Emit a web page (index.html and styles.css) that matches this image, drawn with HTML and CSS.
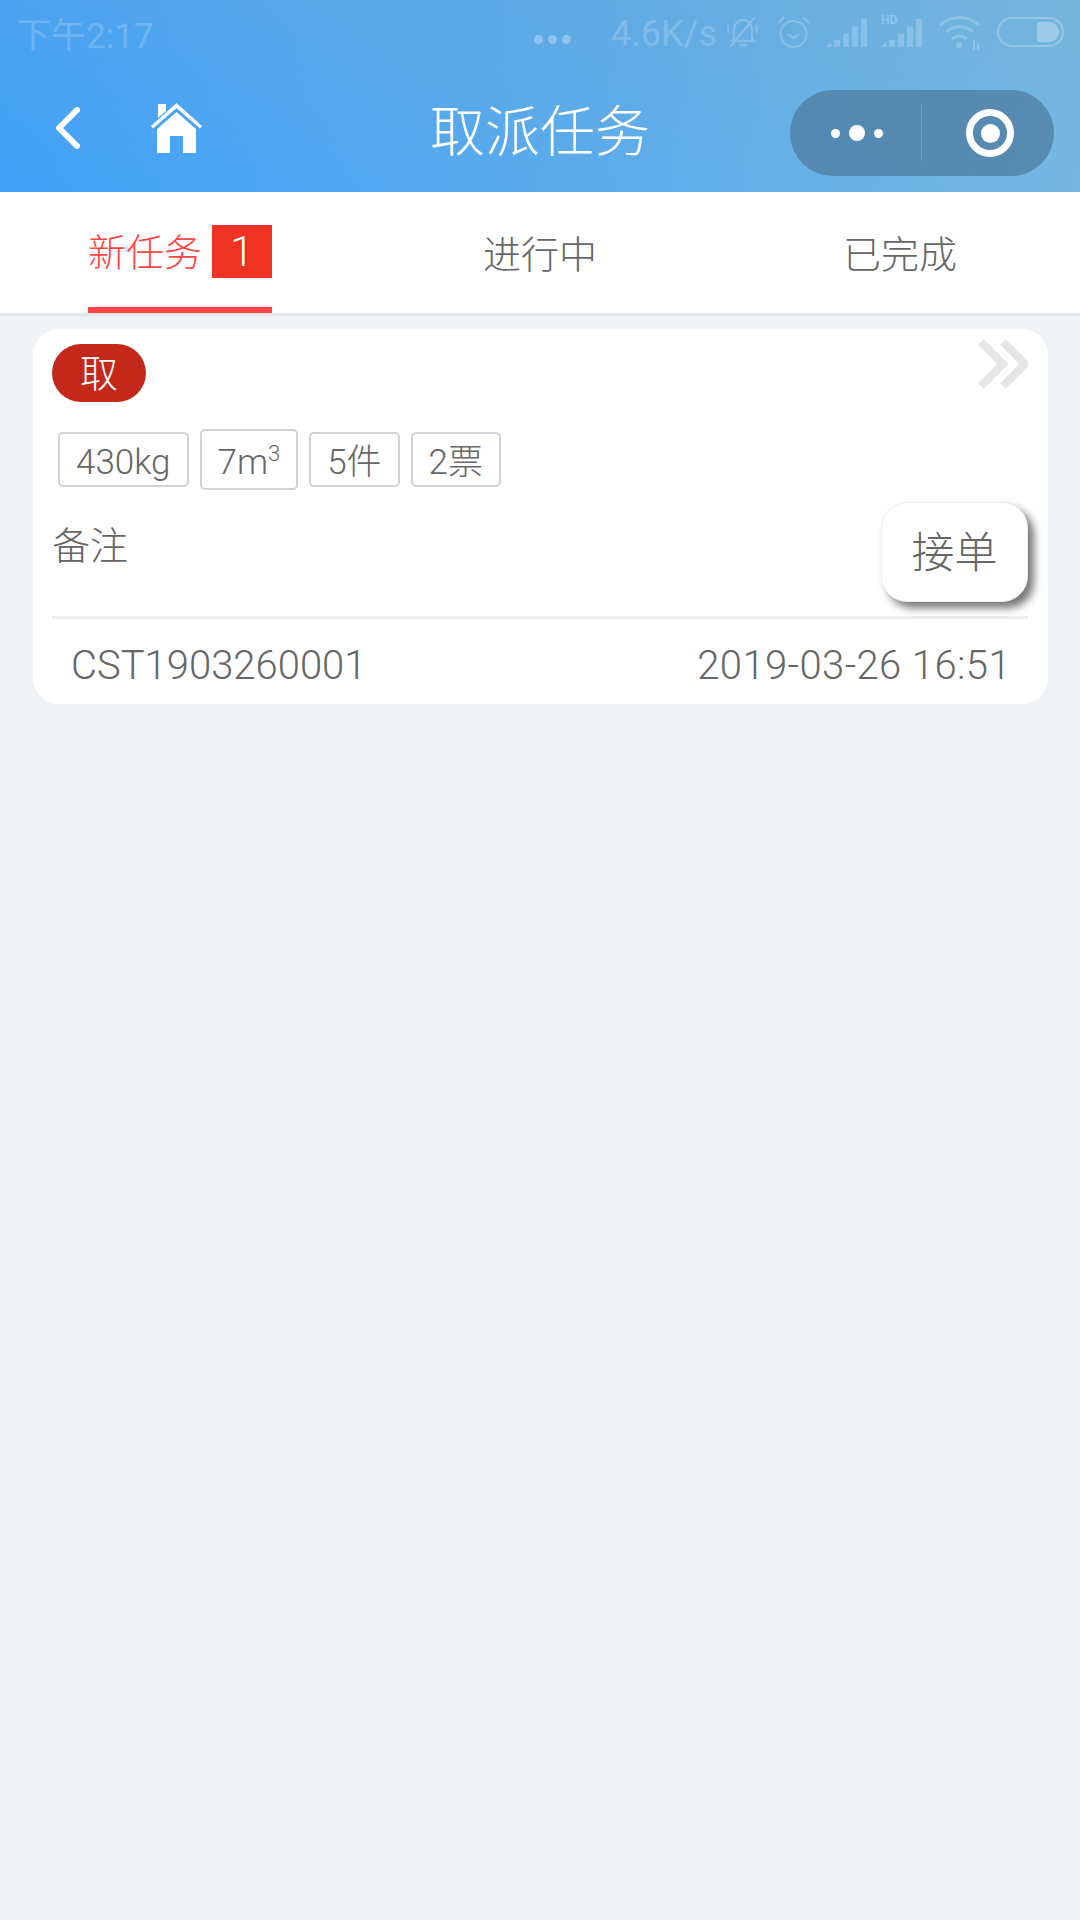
FILE: index.html
```html
<!DOCTYPE html>
<html lang="zh">
<head>
  <meta charset="utf-8">
  <title>取派任务</title>
  <link rel="stylesheet" href="styles.css">
</head>
<body>
  <header class="header">
    <div class="status-bar">
      <span class="status-time">下午2:17</span>
      <span class="status-dots"><i></i><i></i><i></i></span>
      <span class="status-speed">4.6K/s</span>
      <svg class="ic-bell" width="33" height="34" viewBox="0 0 33 34" fill="none" stroke="#fff" stroke-width="2">
        <path d="M8 24V14c0-5 4-9 9-9s9 4 9 9v10l2 2H6z"/>
        <path d="M13 30h8M4 32L29 2"/>
        <path d="M2 10v8M31 10v8"/>
      </svg>
      <svg class="ic-alarm" width="35" height="36" viewBox="0 0 35 36" fill="none" stroke="#fff" stroke-width="2">
        <circle cx="17.500" cy="20" r="13"/>
        <path d="M12 20l5.500 4 5.500-4M2 9l6-6M33 9l-6-6"/>
      </svg>
      <svg class="ic-signal" width="42" height="29" viewBox="0 0 42 32" preserveAspectRatio="none" fill="#fff">
        <path d="M0 32l5-5v5zM8 24h6v8H8zM17 17h6v15h-6zM26 9h6v23h-6zM35 1h6v31h-6z"/>
      </svg>
      <span class="ic-hd">
        <span class="hd-label">HD</span>
        <svg width="42" height="29" viewBox="0 0 42 32" preserveAspectRatio="none" fill="#fff">
          <path d="M0 32l5-5v5zM8 24h6v8H8zM17 17h6v15h-6zM26 9h6v23h-6zM35 1h6v31h-6z"/>
        </svg>
      </span>
      <svg class="ic-wifi" width="43" height="36" viewBox="0 0 43 36" fill="none" stroke="#fff" stroke-width="3">
        <path d="M2 11c11-10 28-10 39 0M8 18c8-7 19-7 27 0M14 25c4-4 11-4 15 0"/>
        <circle cx="21" cy="31" r="3" fill="#fff" stroke="none"/>
        <path d="M36 26v10M40 30v6" stroke-width="2"/>
      </svg>
      <span class="ic-battery"><i></i></span>
    </div>
    <nav class="nav-bar">
      <svg class="nav-back" width="24" height="42" viewBox="0 0 24 42" fill="none" stroke="#fff" stroke-width="6" stroke-linecap="round" stroke-linejoin="round">
        <path d="M21 3L3 21l18 18"/>
      </svg>
      <svg class="nav-home" width="51" height="50" viewBox="0 0 51 50" fill="#fff">
        <path d="M7 1h8v7l-8 7z"/>
        <path d="M25.500 0L51 23l-2 2.500L25.500 5 2 25.500 0 23z"/>
        <path d="M25.500 9L45 26v24H32V33H19v17H6V26z"/>
      </svg>
      <h1 class="nav-title">取派任务</h1>
      <div class="capsule">
        <div class="capsule-more"><i></i><i class="big"></i><i></i></div>
        <div class="capsule-line"></div>
        <div class="capsule-close"><i></i></div>
      </div>
    </nav>
  </header>

  <div class="tabs">
    <div class="tab active">
      <div class="tab-inner">新任务<span class="tab-badge">1</span></div>
    </div>
    <div class="tab"><div class="tab-inner">进行中</div></div>
    <div class="tab"><div class="tab-inner">已完成</div></div>
  </div>

  <main class="list">
    <div class="card">
      <div class="card-top">
        <span class="type-pill">取</span>
        <svg class="card-arrow" width="50" height="50" viewBox="0 0 50 50" fill="none" stroke="#e6e6e6" stroke-width="8">
          <path d="M3 3l22 22L3 47M25 3l22 22-22 22"/>
        </svg>
      </div>
      <div class="tags">
        <span class="tag">430kg</span>
        <span class="tag tag-tall">7m<sup>3</sup></span>
        <span class="tag">5件</span>
        <span class="tag">2票</span>
      </div>
      <div class="note-row">
        <span class="note">备注</span>
        <button class="take-btn">接单</button>
      </div>
      <div class="card-foot">
        <span>CST1903260001</span>
        <span class="foot-time">2019-03-26 16:51</span>
      </div>
    </div>
  </main>
</body>
</html>
```

FILE: styles.css
```css
* {
  box-sizing: border-box;
}
body {
  margin: 0;
  min-height: 1920px;
  background-color: #f0f3f6;
  font-family: Roboto, "Noto Sans CJK SC", sans-serif;
  font-weight: 300;
  color: #666666;
}

/* header */
.header {
  height: 192px;
  background:
    linear-gradient(to bottom, rgba(130,170,190,0.18), rgba(130,170,190,0)),
    linear-gradient(100deg, #3fa1fa 0%, #5aabec 55%, #75b8e2 100%);
}
.status-bar {
  height: 68px;
  display: flex;
  align-items: center;
  padding: 0 16px 4px 16px;
  color: rgba(255,255,255,0.2);
}
.status-bar svg {
  opacity: 0.2;
  flex: none;
}
.status-time {
  font-size: 35px;
  font-weight: 400;
}
.status-dots {
  display: flex;
  gap: 5px;
  margin-left: auto;
  margin-top: 14px;
  margin-right: 2px;
}
.status-dots i {
  width: 9px;
  height: 9px;
  border-radius: 50%;
  background: rgba(255,255,255,0.3);
}
.status-speed {
  font-size: 36px;
  font-weight: 400;
  margin-left: 38px;
  margin-top: 4px;
}
.ic-bell {
  margin-left: 9px;
}
.ic-alarm {
  margin-left: 17px;
}
.ic-signal {
  margin-left: 15px;
}
.ic-hd {
  position: relative;
  display: flex;
  margin-left: 13px;
}
.hd-label {
  position: absolute;
  left: 0;
  top: -5px;
  font-size: 12px;
  font-weight: 700;
  color: rgba(255,255,255,0.25);
}
.ic-wifi {
  margin-left: 15px;
}
.ic-battery {
  width: 67px;
  height: 30px;
  margin-left: 16px;
  padding: 3px;
  display: flex;
  justify-content: flex-end;
  border: 2px solid rgba(255,255,255,0.25);
  border-radius: 15px;
}
.ic-battery i {
  width: 22px;
  background: rgba(255,255,255,0.3);
  border-radius: 2px 10px 10px 2px;
}

.nav-bar {
  position: relative;
  height: 124px;
  display: flex;
  align-items: center;
  padding-left: 56px;
}
.nav-back {
  margin-top: -4px;
}
.nav-home {
  margin-left: 71px;
  margin-top: -4px;
}
.nav-title {
  position: absolute;
  left: 0;
  right: 0;
  top: 27px;
  margin: 0;
  text-align: center;
  font-size: 55px;
  line-height: 74px;
  font-weight: 300;
  color: #ffffff;
}
.capsule {
  display: flex;
  align-items: center;
  width: 264px;
  height: 86px;
  margin-left: auto;
  margin-right: 26px;
  margin-top: 6px;
  border-radius: 43px;
  background-color: rgba(78,124,160,0.75);
}
.capsule-more {
  width: 131px;
  display: flex;
  justify-content: center;
  align-items: center;
  gap: 9px;
  padding-left: 2px;
}
.capsule-more i {
  width: 9px;
  height: 9px;
  border-radius: 50%;
  background: #ffffff;
}
.capsule-more i.big {
  width: 16px;
  height: 16px;
}
.capsule-line {
  width: 1px;
  height: 56px;
  background: rgba(255,255,255,0.2);
}
.capsule-close {
  flex: 1;
  display: flex;
  justify-content: center;
  padding-left: 4px;
}
.capsule-close i {
  width: 48px;
  height: 48px;
  border: 7px solid #ffffff;
  border-radius: 50%;
  display: flex;
  align-items: center;
  justify-content: center;
}
.capsule-close i::after {
  content: "";
  width: 19px;
  height: 19px;
  border-radius: 50%;
  background: #ffffff;
}

/* tabs */
.tabs {
  display: flex;
  height: 124px;
  background-color: #ffffff;
  border-bottom: 3px solid #e6e6e6;
}
.tab {
  flex: 1;
  display: flex;
  justify-content: center;
  font-size: 38px;
}
.tab-inner {
  display: flex;
  align-items: center;
  height: 121px;
  padding-bottom: 3px;
}
.tab.active .tab-inner {
  color: #ff4545;
  border-bottom: 6px solid #ff4545;
  padding-bottom: 0;
}
.tab-badge {
  width: 60px;
  height: 53px;
  margin-left: 10px;
  margin-top: 3px;
  background-color: #ee3224;
  color: #ffffff;
  text-align: center;
  font-size: 42px;
  line-height: 53px;
}

/* card */
.list {
  padding: 13px 32px 0 33px;
}
.card {
  background-color: #ffffff;
  border-radius: 26px;
  padding: 15px 20px 0 19px;
  height: 375px;
}
.card-top {
  display: flex;
  justify-content: space-between;
  align-items: flex-start;
}
.type-pill {
  width: 94px;
  height: 58px;
  border-radius: 29px;
  background-color: #c4281a;
  color: #ffffff;
  text-align: center;
  font-size: 38px;
  line-height: 60px;
}
.card-arrow {
  margin-top: -5px;
}
.tags {
  display: flex;
  align-items: center;
  gap: 11px;
  height: 61px;
  margin-top: 27px;
  padding-left: 6px;
}
.tag {
  height: 55px;
  padding: 0 16px;
  border: 2px solid #d2d2d2;
  border-radius: 5px;
  font-size: 35px;
  line-height: 57px;
}
.tag-tall {
  height: 61px;
  line-height: 63px;
}
.tag sup {
  font-size: 22px;
  line-height: 0;
}
.note-row {
  display: flex;
  justify-content: space-between;
  margin-top: 12px;
  height: 100px;
}
.note {
  font-size: 38px;
  line-height: 88px;
}
.take-btn {
  width: 147px;
  height: 100px;
  border: 1px solid #eeeeee;
  border-radius: 26px;
  background-color: #ffffff;
  box-shadow: 6px 6px 8px #777777;
  font-family: inherit;
  font-weight: 300;
  font-size: 43px;
  color: #666666;
  padding: 0 0 6px;
}
.card-foot {
  display: flex;
  justify-content: space-between;
  align-items: center;
  height: 88px;
  margin-top: 14px;
  padding: 8px 17px 0 19px;
  border-top: 3px solid #eeeeee;
  font-size: 40px;
}
.foot-time {
  letter-spacing: 0.4px;
}
```
